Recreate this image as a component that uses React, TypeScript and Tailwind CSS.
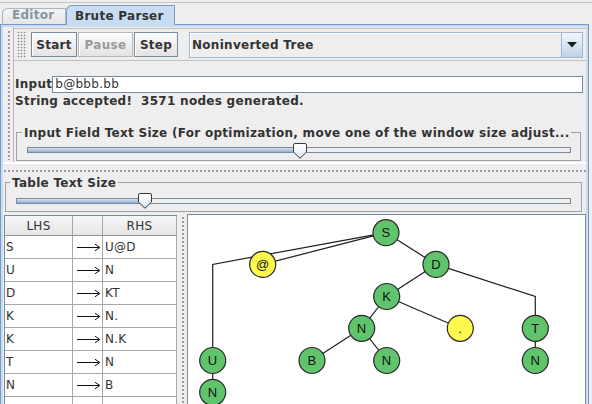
import React from 'react';

const rules: [string, string][] = [
  ['S', 'U@D'],
  ['U', 'N'],
  ['D', 'KT'],
  ['K', 'N.'],
  ['K', 'N.K'],
  ['T', 'N'],
  ['N', 'B'],
  ['', ''],
];

// tree levels (page coordinates)
const L = [232.7, 264.4, 296.5, 328.3, 360.5, 392.3];

type TreeNode = { x: number; y: number; label: string; terminal?: boolean };

const nodes: TreeNode[] = [
  { x: 386, y: L[0], label: 'S' },
  { x: 262.7, y: L[1], label: '@', terminal: true },
  { x: 436, y: L[1], label: 'D' },
  { x: 386.7, y: L[2], label: 'K' },
  { x: 361.7, y: L[3], label: 'N' },
  { x: 460.3, y: L[3], label: '.', terminal: true },
  { x: 535.3, y: L[3], label: 'T' },
  { x: 212.7, y: L[4], label: 'U' },
  { x: 312, y: L[4], label: 'B' },
  { x: 386.7, y: L[4], label: 'N' },
  { x: 535.3, y: L[4], label: 'N' },
  { x: 212.7, y: L[5], label: 'N' },
];

const edges: number[][][] = [
  [[386, L[0]], [262.7, L[1]]],
  [[386, L[0]], [212.7, L[1]], [212.7, L[4]]],
  [[386, L[0]], [436, L[1]]],
  [[436, L[1]], [386.7, L[2]]],
  [[436, L[1]], [535.3, L[2]], [535.3, L[3]]],
  [[386.7, L[2]], [361.7, L[3]]],
  [[386.7, L[2]], [460.3, L[3]]],
  [[361.7, L[3]], [312, L[4]]],
  [[361.7, L[3]], [386.7, L[4]]],
  [[212.7, L[4]], [212.7, L[5]]],
  [[535.3, L[3]], [535.3, L[4]]],
];

function Thumb({ className }: { className: string }) {
  return (
    <svg className={className} width="16" height="16" viewBox="0 0 16 16">
      <defs>
        <linearGradient id="thumbFill" x1="0" y1="0" x2="0" y2="1">
          <stop offset="0" stopColor="#ffffff" />
          <stop offset="0.5" stopColor="#f4f8fc" />
          <stop offset="1" stopColor="#c8ddf2" />
        </linearGradient>
      </defs>
      <path
        d="M1.5 2 Q1.5 0.5 3 0.5 H13 Q14.5 0.5 14.5 2 V9 L8 15.3 L1.5 9 Z"
        fill="url(#thumbFill)"
        stroke="#3a3a3a"
        strokeWidth="1"
      />
    </svg>
  );
}

function Arrow() {
  return (
    <svg width="24" height="9" viewBox="0 0 24 9">
      <path d="M0 4.5 H22.5 M18 1.2 L22.8 4.5 L18 7.8" fill="none" stroke="#111111" strokeWidth="1" />
    </svg>
  );
}

function Button({ label, disabled, className }: { label: string; disabled?: boolean; className: string }) {
  return (
    <div
      className={
        'h-[25px] mt-[3px] flex items-center justify-center font-bold border bg-gradient-to-b from-[#fbfbfb] to-[#e3e3e3] shadow-[inset_1px_1px_0_#ffffff] ' +
        (disabled ? 'border-[#b8b8b8] text-[#9a9a9a] ' : 'border-[#7a8a99] text-[#333333] ') +
        className
      }
    >
      {label}
    </div>
  );
}

export default function App() {
  return (
    <div className="w-[592px] h-[404px] overflow-hidden bg-[#eeeeee] font-['DejaVu_Sans',sans-serif] text-[12px] leading-[14px] tracking-[0.28px] text-[#333333] flex flex-col">
      {/* tab strip */}
      <div className="mt-[2px] h-[22px] shrink-0 border-t border-[#c4c4c4] flex items-end pl-[2px] relative z-10">
        <div className="h-[16px] w-[64px] border-t border-l border-r border-[#a8b4c0] rounded-tl-[6px] bg-gradient-to-b from-[#f4f4f4] to-[#e6e6e6] pl-[9px] font-bold text-[#8494a4] leading-[12px]">
          Editor
        </div>
        <div className="h-[20px] w-[109px] mb-[-1px] border-t border-l border-r border-[#7a98c8] rounded-tl-[6px] bg-[#c8ddf2] pl-[8px] pt-[3px] font-bold">
          Brute Parser
        </div>
      </div>

      {/* tab content */}
      <div className="w-[589px] flex-1 min-h-0 border-t border-l border-r border-[#7a98c8]">
        <div className="h-full border-t-2 border-l-2 border-r-2 border-[#c8ddf2] flex flex-col">
          {/* upper section */}
          <div className="h-[135px] shrink-0 flex">
            <div className="w-[10px] pl-[4px] pt-[3px] pb-[2px]">
              <div className="w-[4px] h-full bg-[radial-gradient(circle,#9a9a9a_0.8px,transparent_1.3px)] bg-[length:4px_4px]" />
            </div>
            <div className="flex-1 border-l border-[#b8b8b8] flex flex-col">
              {/* toolbar */}
              <div className="mt-[1px] h-[33px] border-y border-[#c0c0c0] flex items-start">
                <div className="ml-[3px] mt-[2px] w-[9px] h-[27px] bg-[radial-gradient(circle,#8a8a8a_0.7px,transparent_1.1px)] bg-[length:3px_3px]" />
                <Button label="Start" className="ml-[5px] w-[46px]" />
                <Button label="Pause" disabled className="ml-[1px] w-[55px]" />
                <Button label="Step" className="ml-[1px] w-[44px]" />
                <div className="ml-[11px] mt-[3px] w-[394px] h-[26px] border border-[#a3b8cc] bg-[#eeeeee] flex shadow-[inset_1px_1px_0_#ffffff]">
                  <div className="flex-1 flex items-center pl-[2px] font-bold">Noninverted Tree</div>
                  <div className="w-[21px] h-full border-l border-[#a3b8cc] bg-gradient-to-b from-[#f2f7fc] to-[#bcd2e8] flex items-center justify-center">
                    <svg width="10" height="6" viewBox="0 0 10 6">
                      <path d="M0 0 H10 L5 5.5 Z" fill="#1a1a1a" />
                    </svg>
                  </div>
                </div>
              </div>

              {/* input */}
              <div className="mt-[15px] h-[17px] flex pl-[1px]">
                <div className="font-bold leading-[17px]">Input</div>
                <div className="flex-1 mr-[3px] border border-[#7a8a99] bg-white pl-[2px] leading-[15px]">b@bbb.bb</div>
              </div>
              <div className="mt-[1px] h-[14px] pl-[1px] font-bold whitespace-nowrap">String accepted!&nbsp; 3571 nodes generated.</div>

              {/* input size slider */}
              <div className="mt-[24px] ml-[2px] mr-[5px] h-[29px] border border-[#a0a0a0] relative">
                <div className="absolute left-[5px] top-[-7px] px-[2px] bg-[#eeeeee] font-bold whitespace-nowrap">
                  Input Field Text Size (For optimization, move one of the window size adjust...
                </div>
                <div className="ml-[10px] mt-[14px] w-[544px] h-[6px] border border-[#7a8a99] bg-[#eeeeee] relative">
                  <div className="w-[272px] h-full bg-gradient-to-b from-[#d6e4f3] to-[#94add3]" />
                  <Thumb className="absolute left-[264px] top-[-5px]" />
                </div>
              </div>
            </div>
          </div>

          {/* horizontal splitter */}
          <div className="h-[12px] shrink-0 border-t-2 border-white">
            <div className="mt-[6px] h-[2px] bg-[radial-gradient(circle,#9a9a9a_0.8px,transparent_1.2px)] bg-[length:4px_2px]" />
          </div>

          {/* table text size */}
          <div className="mt-[8px] ml-[2px] mr-[4px] h-[30px] shrink-0 border border-[#a0a0a0] relative">
            <div className="absolute left-[4px] top-[-7px] px-[2px] bg-[#eeeeee] font-bold whitespace-nowrap">Table Text Size</div>
            <div className="ml-[10px] mt-[15px] w-[555px] h-[6px] border border-[#7a8a99] bg-[#eeeeee] relative">
              <div className="w-[128px] h-full bg-gradient-to-b from-[#d6e4f3] to-[#94add3]" />
              <Thumb className="absolute left-[120px] top-[-6px]" />
            </div>
          </div>

          {/* table + tree */}
          <div className="mt-[2px] flex-1 min-h-0 flex overflow-hidden">
            <div className="ml-[1px] mt-[1px] w-[173px] border-l border-t border-[#7a8a99] bg-white flex flex-col">
              <div className="h-[20px] shrink-0 flex border-b border-[#8a96a2] bg-gradient-to-b from-[#f6f6f6] to-[#e6e6e6]">
                <div className="w-[68px] border-r border-[#a8a8a8] flex items-center justify-center">LHS</div>
                <div className="w-[30px] border-r border-[#a8a8a8]" />
                <div className="w-[74px] border-r border-[#a8a8a8] flex items-center justify-center">RHS</div>
              </div>
              {rules.map(([lhs, rhs], i) => (
                <div key={i} className="h-[23px] shrink-0 flex border-b border-[#a8a8a8]">
                  <div className="w-[68px] border-r border-[#a8a8a8] flex items-center pl-[1px]">{lhs}</div>
                  <div className="w-[30px] border-r border-[#a8a8a8] flex items-center justify-end pr-[1px]">
                    {lhs ? <Arrow /> : null}
                  </div>
                  <div className="w-[74px] border-r border-[#a8a8a8] flex items-center pl-[2px]">{rhs}</div>
                </div>
              ))}
            </div>

            <div className="w-[10px] shrink-0 pl-[5px] pt-[2px]">
              <div className="w-[2px] h-full bg-[radial-gradient(circle,#9a9a9a_0.8px,transparent_1.2px)] bg-[length:2px_4px]" />
            </div>

            <div className="flex-1 border-l border-t border-r border-[#7a8a99] bg-white relative overflow-hidden">
              <svg className="absolute left-0 top-0" width="397" height="189" viewBox="188 215 397 189">
                {edges.map((pts, i) => (
                  <polyline
                    key={i}
                    points={pts.map((p) => p.join(',')).join(' ')}
                    fill="none"
                    stroke="#1e1e1e"
                    strokeWidth="1.2"
                  />
                ))}
                {nodes.map((n, i) => (
                  <g key={i}>
                    <circle cx={n.x} cy={n.y} r="13" fill={n.terminal ? '#fff94f' : '#60c46c'} stroke="#2a2a2a" strokeWidth="1.2" />
                    <text
                      x={n.x}
                      y={n.y + 4.6}
                      textAnchor="middle"
                      fontFamily="'Liberation Sans', Arial, sans-serif"
                      fontSize="13"
                      fill="#111111"
                    >
                      {n.label}
                    </text>
                  </g>
                ))}
              </svg>
            </div>
          </div>
        </div>
      </div>
    </div>
  );
}
